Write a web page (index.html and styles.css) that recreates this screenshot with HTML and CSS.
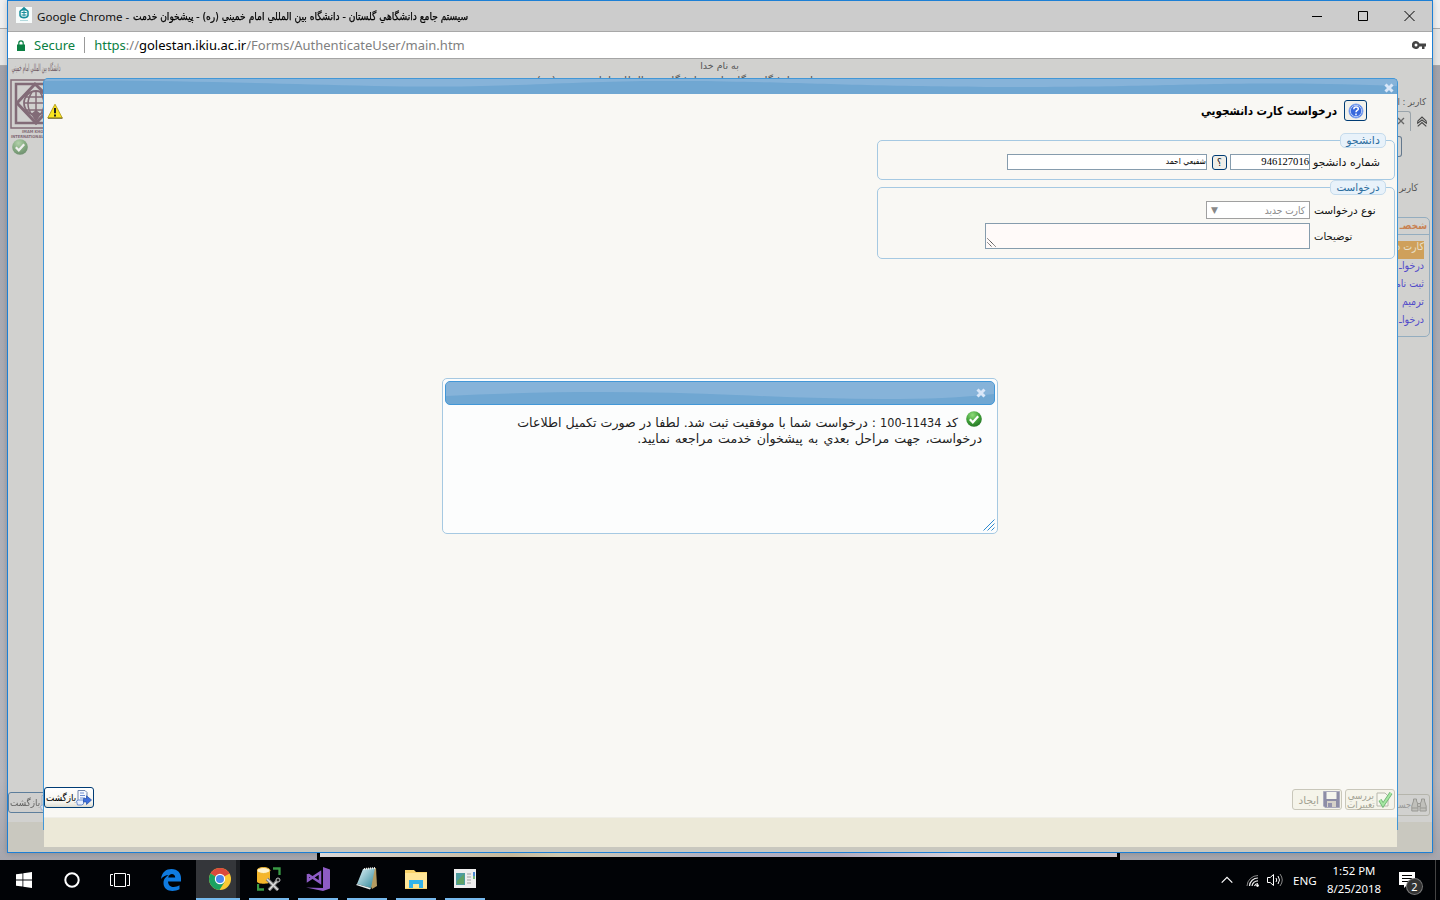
FILE: index.html
```html
<!DOCTYPE html>
<html lang="fa">
<head>
<meta charset="utf-8">
<title>Golestan</title>
<link rel="stylesheet" href="styles.css">
</head>
<body>
<svg width="0" height="0" class="defs">
  <defs>
    <radialGradient id="green" cx=".4" cy=".25" r=".85"><stop offset="0" stop-color="#8edb7a"/><stop offset=".5" stop-color="#43a33b"/><stop offset="1" stop-color="#1d6b22"/></radialGradient>
    <linearGradient id="pad" x1="0" x2="1" y2="1"><stop offset="0" stop-color="#e5f6fa"/><stop offset="1" stop-color="#2d8699"/></linearGradient>
    <symbol id="ok" viewBox="0 0 16 16"><circle cx="8" cy="8" r="7.8" fill="url(#green)"/><path d="M3.8 8.3l3 3 5.4-6" fill="none" stroke="#fff" stroke-width="2.2"/></symbol>
    <symbol id="cross" viewBox="0 0 10 10"><path d="M1.5 1.5l7 7M8.500 1.500l-7 7" stroke="#d9e7f8" stroke-width="3"/></symbol>
    <symbol id="exit" viewBox="0 0 16 16"><path d="M2 .5h7l2 2v8H2z" fill="#f6f9ff" stroke="#7086ad"/><path d="M4 3h4M4 5.500h5M4 8h5" stroke="#6f8fd0"/><path d="M.5 11l2-1h5v4l-2 1h-4z" fill="#e7efff" stroke="#6f8fd0"/><path d="M7.500 8.500h3V5.800l5 4.200-5 4.500V12h-3z" fill="#3d6ddd" stroke="#2450a8" stroke-width=".7"/></symbol>
  </defs>
</svg>
<div class="desktop">
  <div class="behind"><div class="b-title"></div><div class="b-addr"></div><div class="b-rest"></div></div>

  <section class="window">
    <header class="titlebar">
      <svg class="favicon" viewBox="0 0 16 16"><path d="M0 0h16v16H0z" fill="#f7fbfb"/><path d="M8 .8L9.500 2.200h-3z M4 4.500C5 2 11 2 12 4.500v4C11 11.500 5 11.500 4 8.500z" fill="none" stroke="#168d9b" stroke-width="1.500"/><path d="M5.500 5.500h5M8 3.500v6M5.500 8h5" stroke="#168d9b"/><path d="M4 13.500h8" stroke="#9ed0d5" stroke-width=".8"/></svg>
      <div class="title"><span class="ttl-en">Google Chrome -</span> <span class="ttl-fa" dir="rtl">سيستم جامع دانشگاهي گلستان - دانشگاه بين المللي امام خميني (ره) - پيشخوان خدمت</span></div>
      <svg class="winctl" viewBox="0 0 104 12" fill="none" stroke="#000"><path d="M0 6.500h10M46.500 1.500h9v9h-9zM92.500 1l10 10M102.500 1l-10 10"/></svg>
    </header>
    <div class="address">
      <svg class="lock" viewBox="0 0 8 11"><path d="M0 4.500h8V11H0z" fill="#0b8043"/><path d="M1.800 5V3a2.200 2.200 0 0 1 4.400 0v2" fill="none" stroke="#0b8043" stroke-width="1.200"/></svg>
      <span class="secure">Secure</span><i class="sep"></i>
      <span class="url"><b>https</b>://<em>golestan.ikiu.ac.ir</em>/Forms/AuthenticateUser/main.htm</span>
      <svg class="key" viewBox="0 0 14 8"><path d="M4 0a4 4 0 1 0 3.500 5.500H10V8h2.500V5.500H14V2.500H7.500A4 4 0 0 0 4 0zm0 2.500a1.500 1.500 0 1 1 0 3 1.500 1.500 0 0 1 0-3z" fill="#444" fill-rule="evenodd"/></svg>
    </div>
    <div class="page">
      <div class="leftcol">
        <svg class="logo" viewBox="0 0 55 78">
          <text x="27" y="11" class="callig">دانشگاه بين المللي امام خميني</text>
          <g fill="none" stroke="#826b77"><path d="M2 20h46v48H2z" stroke-width="1.500"/><path d="M7 24h38v39H7z" stroke-width="2.500"/><path d="M26 24L8 43l19 20 19-20z" fill="#d1d1cf" stroke-width="3"/><circle cx="27" cy="43" r="12" stroke-width="1.800"/><path d="M15 43h24M17 37h20M17 50h20M27 31v24M23 32q-8 12 0 23M31 32q8 12 0 23" stroke-width="1.500"/></g>
          <path d="M27 62l-5-8 5-4 5 4z" fill="#826b77"/>
          <text x="13" y="73" class="logotext">IMAM KHOMEINI</text><text x="2" y="77.500" class="logotext">INTERNATIONAL UNIVERSITY</text>
        </svg>
        <svg class="ok dim"><use href="#ok"/></svg>
        <div class="btn back ghost"><span dir="rtl">بازگشت</span><svg><use href="#exit"/></svg></div>
      </div>
      <div class="mid"><div class="name" dir="rtl">به نام خدا</div><div class="sys" dir="rtl">سيستم جامع دانشگاهي گلستان - دانشگاه بين المللي امام خميني (ره)</div></div>
      <div class="rightcol">
        <div class="user" dir="rtl">کاربر : ا</div>
        <div class="tabs"><span class="tab"><svg viewBox="0 0 8 8"><path d="M0 1l6 6M6 1L0 7" stroke="#666" stroke-width="1.300"/></svg></span><svg class="chev" viewBox="0 0 10 11"><path d="M.7 5.200L5 1l4.300 4.200M.7 5.200v2L5 4l4.300 3.200v-2M.7 10.300L5 6.500l4.300 3.800"/></svg></div>
        <div class="edge"></div>
        <div class="user2" dir="rtl">کاربر</div>
        <div class="panel">
          <div class="phead" dir="rtl">شخصـ</div>
          <div class="plist" dir="rtl"><div class="sel">کارت د</div><div>درخواـ</div><div>ثبت نام</div><div>ترميم</div><div>درخواـ</div></div>
        </div>
        <div class="search"><span dir="rtl">جسـ</span><svg viewBox="0 0 16 14" fill="#c0c0bb" stroke="#999994"><path d="M2.500 3V1h3v2L7 6v7H.8V8zM10.500 3V1h3v2l1.700 5v5H9V6z"/><path d="M6.500 5.500h3v3h-3zM1 10h6M9 10h6"/></svg></div>
      </div>
      <div class="pagefoot"></div>
    </div>
  </section>
  <div class="photo"></div>

  <section class="dialog">
    <div class="dbar"><svg class="wave" viewBox="0 0 1352 15" preserveAspectRatio="none"><path d="M0 2C100 0 190 4 330 7S520 1 640 2s180 6 340 6 200-7 372-1V0H0z"/></svg><svg class="x"><use href="#cross"/></svg></div>
    <div class="dbody">
      <svg class="warn" viewBox="0 0 16 16"><path d="M8 1.200L15.300 15H.7z" fill="#fae51e" stroke="#b9a323" stroke-linejoin="round"/><path d="M1 15.200h14.500" stroke="#4b4210" stroke-width=".8"/><path d="M8 5v5.200M8 11.500v2" stroke="#222" stroke-width="2"/></svg>
      <div class="form" dir="rtl">
        <div class="heading"><span class="help"><svg viewBox="0 0 16 16"><circle cx="8" cy="8" r="7" fill="#3768dc" stroke="#7ea6f5"/><circle cx="8" cy="8" r="5.700" fill="none" stroke="#dce9ff" stroke-width=".8"/><path d="M5.800 6.200c0-3 4.500-2.700 4.500-.3C10.300 7.500 8 7.400 8 9.200M8 10.500v1.700" fill="none" stroke="#fff" stroke-width="1.500"/></svg></span><strong>درخواست کارت دانشجويي</strong></div>
        <div class="field f1"><span class="legend"><i>دانشجو</i></span>
          <div class="row"><label class="l1">شماره دانشجو</label><span class="input num">946127016</span><span class="q">؟</span><span class="input nm"><i>شفيعي احمد</i></span></div>
        </div>
        <div class="field f2"><span class="legend"><i>درخواست</i></span>
          <div class="row"><label class="l2">نوع درخواست</label><span class="select"><i>کارت جديد</i><b>▼</b></span></div>
          <div class="row area"><label class="l3">توضيحات</label><span class="textarea"><svg viewBox="0 0 9 9" stroke="#333" stroke-dasharray="1.200 .5"><path d="M.5.500l8 8M.5 4.500l4 4"/></svg></span></div>
        </div>
      </div>
      <div class="actions">
        <div class="btn back"><span dir="rtl">بازگشت</span><svg><use href="#exit"/></svg></div>
        <div class="right">
          <div class="btn off"><span dir="rtl" class="create">ايجاد</span><svg viewBox="0 0 17 17"><path d="M.5.500h16v16H2L.5 15z" fill="#8d8da6" stroke="#aaaabd"/><path d="M3.500 1h10v7h-10z" fill="#f5f5ee"/><path d="M4 10h9v6H4z" fill="#d5d1c9"/><path d="M5 12h4v4H5z" fill="#9493ac"/></svg></div>
          <div class="btn off"><span dir="rtl" class="two"><i>بررسي</i><i>تغييرات</i></span><svg viewBox="0 0 17 17"><path d="M1 2h8l3 3v10H1z" fill="#f7f7ef" stroke="#b8b8ad"/><path d="M4 9l3 5 8-12" fill="none" stroke="#70b474" stroke-width="3.500"/><path d="M4 9l3 5 8-12" fill="none" stroke="#a5e7a2" stroke-width="2"/></svg></div>
        </div>
      </div>
    </div>
    <div class="dfoot"></div>
  </section>

  <section class="msg">
    <div class="mbar"><svg class="wave" viewBox="0 0 548 22" preserveAspectRatio="none"><path d="M0 14C100 9 200 9 290 13s190 7 258-1V0H0z"/></svg><svg class="x"><use href="#cross"/></svg></div>
    <div class="mtext" dir="rtl"><div class="m1"><svg class="ok"><use href="#ok"/></svg><span>کد <i class="code">11434-100</i> : درخواست شما با موفقيت ثبت شد. لطفا در صورت تکميل اطلاعات</span></div><div class="m2"><span>درخواست، جهت مراحل بعدي به پيشخوان خدمت مراجعه نماييد.</span></div></div>
    <svg class="grip" viewBox="0 0 12 12"><path d="M.5 11.500l11-11M4.500 11.500l7-7M8.500 11.500l3-3"/></svg>
  </section>

  <footer class="taskbar">
    <div class="apps">
      <div class="app"><svg viewBox="0 0 16 16" fill="#fff"><path d="M0 2.300L6.500 1.400v6.100H0zM7.300 1.300L16 0v7.500H7.300zM0 8.500h6.500v6.100L0 13.700zM7.300 8.500H16V16l-8.700-1.300z"/></svg></div>
      <div class="app"><svg viewBox="0 0 16 16"><circle cx="8" cy="8" r="6.700" fill="none" stroke="#fff" stroke-width="2"/></svg></div>
      <div class="app"><svg class="w20" viewBox="0 0 20 16" fill="none" stroke="#fff"><path d="M4.500 1.500h11v13h-11zM3 2.500H.5v11H3M17 2.500h2.500v11H17"/></svg></div>
      <div class="app edgeapp"><svg class="w22" viewBox="0 0 20 22"><path d="M0 10C1 3 5 0 10.500 0 17 0 20 4.500 20 9v3.500H7C7.300 19 14 19 18.500 16.300v4C12 23.500 2.500 22.500 2.500 14c0-4 2.500-6.500 5.500-8C4.500 6 1.500 8 0 10zm7.200-1.500h7C14.200 3.800 8 3.700 7.200 8.500z" fill="#0f7be0"/></svg></div>
      <div class="app chrome on"><svg class="w22" viewBox="0 0 22 22"><circle cx="11" cy="11" r="11" fill="#fbc934"/><path d="M11 11L1.500 5.500a11 11 0 0 1 19 0z" fill="#db4a3d"/><path d="M11 11L1.500 5.500A11 11 0 0 0 10.500 22l5-8z" fill="#1ba261"/><path d="M11 6h9.800l-.5-1H6z" fill="#db4a3d"/><circle cx="11" cy="11" r="5.200" fill="#fff"/><circle cx="11" cy="11" r="4" fill="#4a86ee"/></svg></div>
      <div class="app on"><svg class="w24" viewBox="0 0 24 24"><path d="M0 3.500v11c0 3 13 3 13 0v-11z" fill="#f5b62a"/><ellipse cx="6.500" cy="3.500" rx="6.500" ry="3" fill="#fff3cc" stroke="#efb62f"/><path d="M16 1.500h6.500V8M1 17v5.500h6" fill="none" stroke="#3a9b45" stroke-width="2.300"/><path d="M10 12l11 11M22 12L12 23" stroke="#777" stroke-width="3.500"/><path d="M10 12l11 11M22 12L12 23" stroke="#ddd" stroke-width="1.500"/><circle cx="21" cy="13" r="2" fill="#222" stroke="#bbb"/></svg></div>
      <div class="app on"><svg class="w24" viewBox="0 0 24 24"><path d="M17 0l7 2.500v19L17 24 0 20.500l17 .5z" fill="#8e5cc5"/><path d="M2 7v6.500l12-8v10L2 7.500" fill="none" stroke="#8e5cc5" stroke-width="2.500"/></svg></div>
      <div class="app on"><svg class="w24" viewBox="0 0 24 24"><path d="M8 2l13-1 1 18-5 3z" fill="#b49b61"/><path d="M8 2l12-1-4 20-14-4z" fill="url(#pad)"/><path d="M2 17l14 4-1 1.500L1 18z" fill="#e6eeee"/><path d="M9 2l11-1" stroke="#eee" stroke-dasharray="1 1" stroke-width="2"/></svg></div>
      <div class="app on"><svg class="w24" viewBox="0 0 24 24"><path d="M1 3h9l2 2h11v17H1z" fill="#f8d36b"/><path d="M1 6h22v15H1z" fill="#ffe698"/><path d="M5 21v-8h14v8h-4v-4H9v4z" fill="#34b3ea"/></svg></div>
      <div class="app on"><svg class="w24" viewBox="0 0 24 24"><path d="M1 2h22v19H1z" fill="#eee"/><path d="M3 6h9v12H3z" fill="#4f9da0"/><path d="M4 14l7-7v10H4z" fill="#60a266"/><path d="M14 7h4M14 10h4M14 13h4M14 16h4" stroke="#bbb" stroke-width="1.500"/><path d="M21 5v4" stroke="#1467c9" stroke-width="1.500"/><path d="M21 9v3" stroke="#49a456" stroke-width="1.500"/></svg></div>
    </div>
    <div class="tray">
      <svg class="up" viewBox="0 0 12 8"><path d="M.7 6.700L6 1.400l5.300 5.300" fill="none" stroke="#fff" stroke-width="1.200"/></svg>
      <svg class="wifi" viewBox="0 0 13 13" fill="none" stroke="#eee"><path d="M1 12A11 11 0 0 1 12 1.500" stroke="#888"/><path d="M3.500 12A8.500 8.500 0 0 1 12 4M6 12A6 6 0 0 1 12 6.800M8.500 12A4 4 0 0 1 12 9.500" stroke-width="1.200"/><circle cx="11.500" cy="11.500" r="1" fill="#fff"/></svg>
      <svg class="vol" viewBox="0 0 16 14" fill="none" stroke="#fff"><path d="M.5 4.500h2.700l3.300-3v11l-3.300-3H.5zM9 5q1.500 2 0 4M11 3q3 4 0 8"/><path d="M13 1q4.500 6 0 12" stroke="#888"/></svg>
      <span class="lang">ENG</span>
      <div class="clock"><div>1:52 PM</div><div>8/25/2018</div></div>
      <div class="note"><svg viewBox="0 0 16 16"><path d="M0 0h16v13H8l-3 3v-3H0z" fill="#fff"/><path d="M3 3.500h10M3 6.500h10M3 9.500h7" stroke="#000"/></svg><span>2</span></div>
      <i class="peek"></i>
    </div>
  </footer>
</div>
</body>
</html>
```
FILE: styles.css
```css
* { box-sizing: border-box; }
body { margin: 0; font-family: "DejaVu Sans Condensed", "DejaVu Sans", sans-serif; }
i, em { font-style: normal; }
svg { display: block; flex: none; }
.defs { position: absolute; }
.desktop { position: relative; width: 1440px; height: 900px; overflow: hidden; background: #a9a9b0; white-space: nowrap; }
.behind { height: 860px; display: flex; flex-direction: column; }
.b-title { height: 29px; background: #f0f0f0; border-bottom: 1px solid #aaa; }
.b-addr { height: 37px; background: #e6e6e6; border-bottom: 1px solid #aaa; }
.b-rest { flex: 1; background: linear-gradient(#a3a3ab, #b8b8be 90%, #a6a6ad); }
.photo { position: absolute; left: 317px; top: 853px; width: 803px; height: 7px; border: solid #000; border-width: 0 3px 3px; background: linear-gradient(90deg, #dcd8d6, #c6b99b 24%, #cfc9b0 30%, #b3b1be 48%, #b2acbd 65%, #d5d0d8 80%, #cdc5c9 95%); }

.window { position: absolute; z-index: 0; left: 7px; top: 0; width: 1426px; height: 853px; border: 1px solid #1c7fd5; background: #d1d1cf; display: flex; flex-direction: column; box-shadow: 0 0 6px rgba(0,0,0,.22); }
.titlebar { height: 31px; background: #ccc; border-bottom: 1px solid #a8a8a8; display: flex; align-items: center; padding: 0 16px 0 8px; }
.favicon { width: 16px; height: 16px; margin-top: -2px; }
.title { margin-left: 5px; font-size: 12px; display: flex; flex: 1; gap: 4px; align-items: center; color: #111; }
.ttl-en { font-family: "Noto Sans", sans-serif; font-size: 11.6px; width: 92px; }
.ttl-fa { font-size: 11px; color: #000; display: inline-block; transform: scaleX(.922); transform-origin: 0 50%; -webkit-text-stroke: .25px #000; }
.winctl { width: 104px; height: 12px; }
.address { height: 27px; background: #fff; border-bottom: 1px solid #a5a5a5; display: flex; align-items: center; padding: 0 6px 0 9px; font: 13px "Noto Sans", sans-serif; color: #808080; }
.lock { width: 8px; height: 11px; }
.secure { margin-left: 9px; color: #0b8043; }
.sep { width: 1px; height: 16px; background: #999; margin: 0 9px; }
.url { flex: 1; }
.url b { font-weight: 400; color: #0b8043; }
.url em { color: #000; }
.key { width: 14px; height: 8px; }

.page { flex: 1; display: flex; justify-content: space-between; position: relative; font-size: 10px; color: #555; }
.pagefoot { position: absolute; left: 0; right: 0; bottom: 0; height: 30px; background: #c9c8bf; }
.leftcol { width: 60px; padding: 1px 0 0 1px; display: flex; flex-direction: column; }
.logo { width: 55px; height: 78px; }
.logotext { font: 700 4px "DejaVu Sans Condensed", sans-serif; fill: #826b77; }
.callig { font: 10px "DejaVu Sans Condensed", sans-serif; fill: #6d5862; text-anchor: middle; transform: scaleX(.42); transform-origin: 27px 0; }
.ok { width: 16px; height: 16px; }
.leftcol .ok { margin: 1px 0 0 3px; }
.dim { opacity: .65; }
.leftcol .dim { opacity: .65; filter: saturate(.6); }
.mid { text-align: center; width: 400px; overflow: hidden; height: 20px; margin-left: -26px; }
.name { font: 9.500px/13px "DejaVu Sans", sans-serif; }
.sys { font: 11px/17px "DejaVu Sans", sans-serif; margin-left: -46px; }
.rightcol { width: 35px; display: flex; flex-direction: column; overflow: hidden; }
.user { margin: 36px 6px 0 0; height: 14px; line-height: 14px; font-size: 9.5px; }
.tabs { display: flex; margin-top: 2px; height: 20px; align-items: center; }
.tab { width: 14px; height: 20px; border: solid #9aa4ab; border-width: 1px 1px 0 0; border-radius: 0 3px 0 0; padding: 5px 0 0 1px; }
.tab svg { width: 8px; height: 8px; }
.chev { width: 10px; height: 11px; margin-left: 6px; fill: none; stroke: #444; stroke-width: 1.1; }
.edge { width: 5px; height: 21px; margin-top: 5px; border: 1px solid #64788d; border-left: 0; border-radius: 0 3px 3px 0; }
.user2 { margin: 24px 14px 0 0; line-height: 14px; font-size: 10px; }
.panel { margin: 22px 2px 0 -5px; height: 120px; border: 1px solid #94adbf; border-radius: 0 5px 5px 0; }
.phead { height: 17px; line-height: 16px; border-bottom: 1px solid #94adbf; color: #c98252; font-weight: 700; padding-right: 2px; }
.plist { padding: 6px 5px 0 0; color: #514bc9; font-size: 10.5px; }
.plist div { height: 18px; line-height: 12px; }
.plist .sel { background: #cfa05b; color: #e9e0cc; line-height: 11px; }
.search { height: 22px; width: 34px; margin: 457px 0 0 -1px; border: 1px solid #b5b5ac; border-radius: 3px; display: flex; align-items: center; justify-content: flex-end; color: #999; padding-right: 2px; font-size: 9px; }
.search svg { width: 16px; height: 14px; }

.btn { height: 21px; border: 1px solid #003c74; border-radius: 3px; background: linear-gradient(#fff, #f5f4ee 75%, #dfddd3); display: flex; align-items: center; justify-content: space-between; color: #000; font-size: 10px; width: 50px; padding: 0 1px; }
.btn svg { width: 16px; height: 16px; }
.btn.ghost { margin: 637px 0 0 -1px; opacity: .55; background: #ccc; }
.btn.off { border-color: #c9c7ba; background: #f5f4ea; color: #a1a192; }
.btn.back { font-size: 9.8px; }
.btn.back span { width: 30px; direction: ltr; }

.dialog { position: absolute; left: 43px; top: 78px; width: 1355px; height: 769px; display: flex; flex-direction: column; }
.dbar { height: 16px; border: 1px solid #4297d7; border-bottom: 0; border-radius: 5px 5px 0 0; background: #70a7d2; overflow: hidden; position: relative; display: flex; justify-content: flex-end; align-items: center; padding: 2px 3px 0 0; }
.wave { position: absolute; left: 0; top: 0; width: 100%; height: 100%; fill: #86b3d9; }
.x { position: relative; width: 10px; height: 10px; }
.dbody { height: 724px; border: solid #4297d7; border-width: 0 1px; background: #f9f8f4; display: grid; grid-template: 1fr 31px / 20px 1fr; }
.warn { width: 16px; height: 16px; margin: 9px 0 0 3px; }
.dfoot { position: relative; flex: 1; margin: 0 1px; background: #ece9d8; box-shadow: 0 -1px #efeee8; }
.dfoot::before { content: ""; position: absolute; left: -1px; right: -1px; top: 0; height: 12px; border: solid #4297d7; border-width: 0 1px; }
.form { display: flex; flex-direction: column; font-size: 10px; padding: 6px 2px 0 0; color: #111; }
.heading { display: flex; align-items: center; gap: 7px; margin-right: 28px; height: 21px; font-size: 11.6px; color: #000; }
.help { width: 23px; height: 21px; border: 1px solid #003c74; border-radius: 3px; display: flex; align-items: center; justify-content: center; background: #f2f1eb; }
.help svg { width: 16px; height: 16px; }
.field { width: 518px; border: 1px solid #a6c9e2; border-radius: 5px; }
.f1 { height: 40px; margin-top: 19px; }
.f2 { height: 72px; margin-top: 7px; }
.legend { display: flex; align-items: center; justify-content: center; height: 15px; margin: -8px 8px 0 0; border: 1px solid #c5dbec; border-radius: 5px; background: #e8f2fa; color: #2e6e9e; width: 46px; font: 11px/13px "DejaVu Sans", sans-serif; }
.f2 .legend { width: 56px; font-size: 10.4px; }
.row { display: flex; align-items: center; height: 16px; margin-top: 6px; padding-right: 14px; }
.row label { width: 70px; flex: none; text-align: left; padding-left: 3px; font-family: "DejaVu Sans", sans-serif; }
.row .l1 { font-size: 11px; }
.row .l2 { font-size: 10.5px; padding-left: 4px; }
.row .l3 { padding-left: 4px; }
.input { height: 16px; background: #fff; border: 1px solid #869cad; font: 10.6px/13px "Liberation Serif", "DejaVu Sans Condensed", serif; color: #000; text-align: right; }
.num { width: 80px; }
.nm { width: 200px; font: 8.5px/12px "DejaVu Sans Condensed", sans-serif; }
.q { width: 15px; height: 15px; margin: 0 3px 0 5px; border: 1px solid #003c74; border-radius: 3px; background: #efeee8; text-align: center; line-height: 13px; font-size: 10px; }
.f2 .row { margin-top: 6px; height: 18px; }
.select { width: 104px; height: 18px; border: 1px solid #a0a0a0; background: #fff; display: flex; justify-content: space-between; align-items: center; padding: 0 4px; color: #888; font-size: 10px; }
.select b { font: 9px "DejaVu Sans"; }
.f2 .area { height: 26px; margin-top: 4px; }
.textarea { width: 325px; height: 26px; border: 1px solid #869cad; background: #fffaf9; display: flex; justify-content: flex-end; align-items: flex-end; padding: 0 0 1px 1px; }
.textarea svg { width: 9px; height: 9px; }
.actions { grid-column: 1 / 3; display: flex; justify-content: space-between; padding: 0 2px 0 0; }
.right { display: flex; gap: 3px; margin-top: 2px; }
.two { line-height: 9px; display: flex; flex-direction: column; text-align: center; font-size: 9.8px; }
.create { width: 25px; text-align: right; font-family: "DejaVu Sans", sans-serif; font-size: 10.5px; }
.right svg { width: 17px; height: 17px; }

.msg { position: absolute; left: 442px; top: 378px; width: 556px; height: 156px; border: 1px solid #a6c9e2; border-radius: 5px; background: #fcfdfd; padding: 2px; display: flex; flex-direction: column; }
.mbar { height: 24px; margin: 0 0 6px; border: 1px solid #4297d7; border-radius: 5px; background: #70a7d2; overflow: hidden; position: relative; display: flex; align-items: center; justify-content: flex-end; padding-right: 8px; }
.mtext { flex: 1; padding: 0 13px 0 0; font: 12.600px "DejaVu Sans", sans-serif; color: #222; }
.m1 { display: flex; gap: 8px; height: 17px; line-height: 23px; }
.code { font: 12.5px "DejaVu Sans Condensed", sans-serif; }
.m2 { height: 16px; line-height: 21px; word-spacing: 1.200px; }
.grip { width: 12px; height: 12px; align-self: flex-end; stroke: #2f8bd0; }

.taskbar { position: absolute; left: 0; top: 860px; width: 1440px; height: 40px; background: #010306; display: flex; justify-content: space-between; color: #fff; font-family: "Noto Sans", sans-serif; }
.apps { display: flex; }
.app { width: 48px; height: 40px; display: flex; align-items: center; justify-content: center; }
.app svg { width: 16px; height: 16px; }
.app svg.w20 { width: 20px; }
.app svg.w22 { width: 22px; height: 22px; }
.app svg.w24 { width: 24px; height: 24px; }
.edgeapp { width: 52px; padding-left: 2px; }
.app.on { width: 40px; border-bottom: 2px solid #76b9ed; margin-left: 9px; }
.app.chrome { width: 44px; margin: 0; padding-left: 3px; background: #34363a; box-shadow: inset -4px 0 #1c1e22; }
.tray { display: flex; align-items: center; font-size: 12px; }
.up { width: 12px; height: 8px; margin-right: 13px; }
.wifi { width: 13px; height: 13px; margin-right: 8px; }
.vol { width: 16px; height: 14px; margin-right: 10px; }
.lang { width: 24px; font-size: 11.6px; }
.clock { width: 60px; text-align: center; margin-left: 7px; line-height: 18px; font-size: 11.4px; }
.note { position: relative; width: 24px; height: 16px; margin-left: 15px; }
.note svg { width: 16px; height: 16px; }
.note span { position: absolute; left: 8px; top: 7px; width: 15px; height: 15px; border-radius: 50%; background: #333; box-shadow: 0 0 0 1px #777; font-size: 11px; line-height: 15px; text-align: center; }
.peek { width: 1px; height: 40px; margin: 0 4px 0 12px; background: #444; }
```
